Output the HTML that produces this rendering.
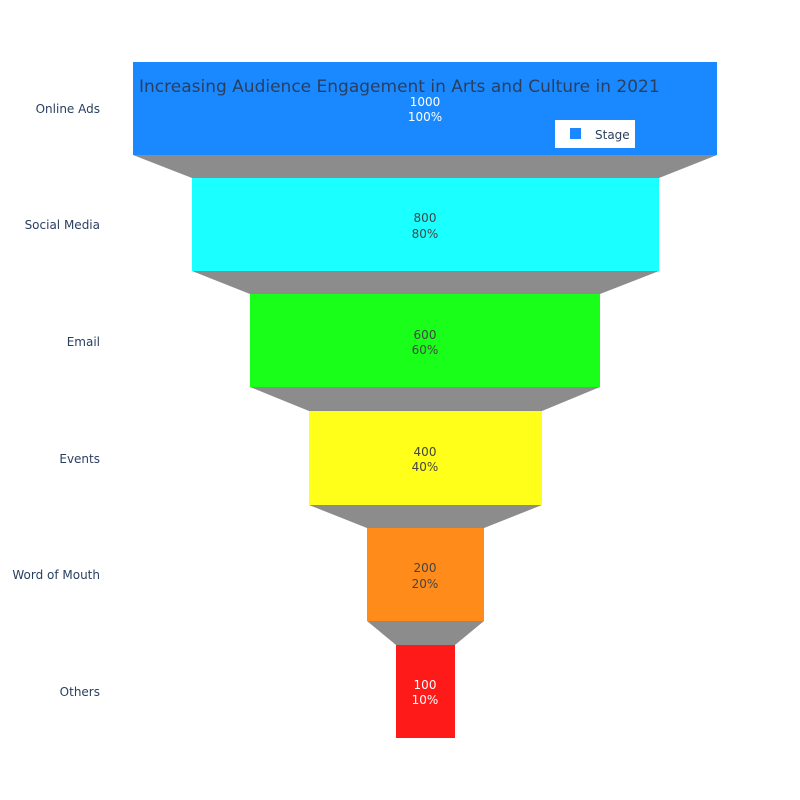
<!DOCTYPE html>
<html><head><meta charset="utf-8"><style>
html,body{margin:0;padding:0;background:#fff;}
svg{display:block;font-family:"DejaVu Sans","Liberation Sans",sans-serif;}
</style></head><body>
<svg width="800" height="800" viewBox="0 0 800 800">
<rect width="800" height="800" fill="#fff"/>
<g fill="#8c8c8c">
<polygon points="133,155 717,155 659,178 192,178"/>
<polygon points="192,271 659,271 600,294 250,294"/>
<polygon points="250,387 600,387 542,411 309,411"/>
<polygon points="309,505 542,505 484,528 367,528"/>
<polygon points="367,621 484,621 455,645 396,645"/>
</g>
<rect x="133" y="62" width="584" height="93" fill="#1a88ff"/>
<rect x="192" y="178" width="467" height="93" fill="#1affff"/>
<rect x="250" y="294" width="350" height="93" fill="#1aff1a"/>
<rect x="309" y="411" width="233" height="94" fill="#ffff1a"/>
<rect x="367" y="528" width="117" height="93" fill="#ff8c1a"/>
<rect x="396" y="645" width="59" height="93" fill="#ff1a1a"/>
<g font-size="12" text-anchor="middle">
<text x="425" y="106" fill="#fff">1000</text><text x="425" y="121" fill="#fff">100%</text>
<text x="425" y="222" fill="#444">800</text><text x="425" y="238" fill="#444">80%</text>
<text x="425" y="339" fill="#444">600</text><text x="425" y="354" fill="#444">60%</text>
<text x="425" y="456" fill="#444">400</text><text x="425" y="471" fill="#444">40%</text>
<text x="425" y="572" fill="#444">200</text><text x="425" y="588" fill="#444">20%</text>
<text x="425" y="689" fill="#fff">100</text><text x="425" y="704" fill="#fff">10%</text>
</g>
<g font-size="12" text-anchor="end" fill="#2a3f5f">
<text x="100" y="113">Online Ads</text>
<text x="100" y="229">Social Media</text>
<text x="100" y="346">Email</text>
<text x="100" y="463">Events</text>
<text x="100" y="579">Word of Mouth</text>
<text x="100" y="696">Others</text>
</g>
<text x="139" y="92" font-size="17" fill="#2a3f5f">Increasing Audience Engagement in Arts and Culture in 2021</text>
<rect x="555" y="120" width="80" height="28" fill="#fff"/>
<rect x="570" y="128" width="11" height="11" fill="#1a88ff"/>
<text x="595" y="139" font-size="12" fill="#2a3f5f">Stage</text>
</svg>
</body></html>
